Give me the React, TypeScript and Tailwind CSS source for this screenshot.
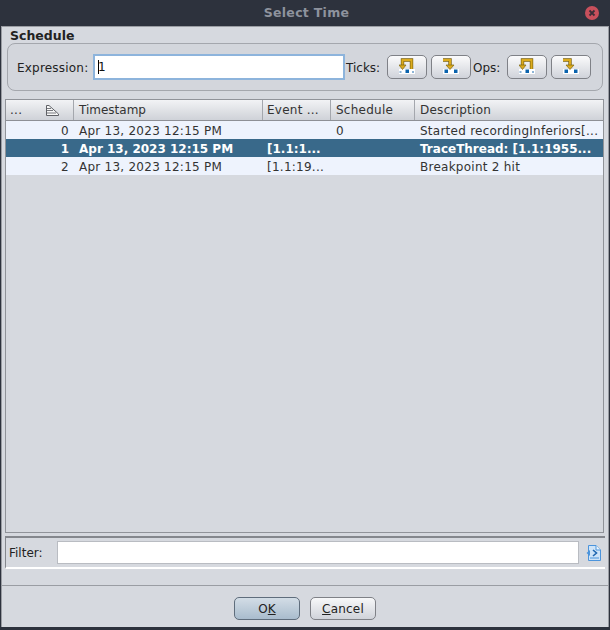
function UndoIcon() {
  return (
    <svg width="16" height="16" viewBox="0 0 16 16" className="mb-[2px]">
      <rect x="0" y="11" width="16" height="5" fill="#ffffff" />
      <path d="M3.5 8V2H12.5V11" fill="none" stroke="#7d6410" strokeWidth="3.4" />
      <path d="M3.5 8V2H12.5V11" fill="none" stroke="#dcab1d" strokeWidth="2" />
      <path d="M0 7H7L3.5 11.5Z" fill="#dcab1d" stroke="#7d6410" strokeWidth="0.7" />
      <rect x="6.5" y="11.5" width="3.5" height="3.5" fill="#0a63ad" />
      <rect x="0.5" y="13" width="2" height="2" fill="#8db4d6" />
      <rect x="13" y="13" width="2" height="2" fill="#8db4d6" />
    </svg>
  );
}

function StepIcon() {
  return (
    <svg width="16" height="16" viewBox="0 0 16 16" className="mb-[2px]">
      <rect x="0" y="11" width="16" height="5" fill="#ffffff" />
      <path d="M0 2H7V8" fill="none" stroke="#7d6410" strokeWidth="3.4" />
      <path d="M0 2H7V8" fill="none" stroke="#dcab1d" strokeWidth="2" />
      <path d="M3 7H11L7 11.5Z" fill="#dcab1d" stroke="#7d6410" strokeWidth="0.7" />
      <rect x="1.5" y="11.5" width="3.5" height="3.5" fill="#0a63ad" />
      <rect x="11" y="11.5" width="3.5" height="3.5" fill="#0a63ad" />
    </svg>
  );
}

function IconButton({ children }: { children: React.ReactNode }) {
  return (
    <button className="flex h-[24px] w-[40px] items-center justify-center rounded-[5px] border border-[#7f8187] bg-gradient-to-b from-[#fbfbfc] to-[#d0d3da]">
      {children}
    </button>
  );
}

function SortIcon() {
  return (
    <svg width="13" height="11" viewBox="0 0 13 11">
      <path d="M.5 .5H3L12.5 9V10.5H.5Z" fill="#f7f7f7" stroke="#5f6166" strokeWidth="1" />
      <path d="M1 3.5H5M1 5.5H7M1 8H10" stroke="#77797e" strokeWidth="1" />
    </svg>
  );
}

function FileIcon() {
  return (
    <svg width="15" height="16" viewBox="0 0 15 16">
      <path d="M2.5 .5H10L14.5 5V15.5H2.5Z" fill="#cfe4f8" stroke="#4b94dc" />
      <path d="M10 .5V5H14.5" fill="#eef6fd" stroke="#4b94dc" />
      <path d="M4 13H13" stroke="#4b94dc" />
      <path d="M4 5L.5 8L4 11Z" fill="#4b94dc" />
      <path d="M7 5L10.5 8L7 11" fill="none" stroke="#1f66b0" strokeWidth="1.6" />
    </svg>
  );
}

const colClass = ['w-[68px]', 'w-[189px]', 'w-[68px]', 'w-[84px]', 'flex-1'];

const rows = [
  { n: '0', time: 'Apr 13, 2023 12:15 PM', event: '', sched: '0', desc: 'Started recordingInferiors[...', bg: 'bg-[#eef3fd] tracking-[0.25px] text-[#333333]' },
  { n: '1', time: 'Apr 13, 2023 12:15 PM', event: '[1.1:1...', sched: '', desc: 'TraceThread: [1.1:1955...', bg: 'bg-[#39698a] font-bold text-white' },
  { n: '2', time: 'Apr 13, 2023 12:15 PM', event: '[1.1:19...', sched: '', desc: 'Breakpoint 2 hit', bg: 'bg-[#eef3fd] tracking-[0.25px] text-[#333333]' },
];

export default function App() {
  return (
    <div className="flex h-[630px] w-[610px] flex-col bg-[#2d323d] font-['DejaVu_Sans',sans-serif] text-[12px] leading-none text-[#222222]">
      <div className="flex h-[26px] shrink-0 items-center pr-[11px]">
        <div className="flex-1 pl-[28px] text-center text-[12.5px] font-bold tracking-[0.3px] text-[#8e939d]">Select Time</div>
        <svg width="14" height="14" viewBox="0 0 14 14">
          <circle cx="7" cy="7" r="7" fill="#c8505c" />
          <path d="M4.5 4.5L9.5 9.5M9.5 4.5L4.5 9.5" stroke="#3a2e38" strokeWidth="1.8" />
        </svg>
      </div>

      <div className="mx-[1px] flex flex-1 flex-col border border-b-0 border-[#9a9da3] bg-[#d6d9df]">
        <div className="flex flex-1 flex-col border-b border-[#9a9da3] px-[1px]">
          <div className="flex h-[15px] items-end pl-[7px] text-[12.5px] font-bold leading-[13px] text-[#222222]">Schedule</div>
          <div className="mx-[4px] mt-[1px] flex h-[48px] items-center rounded-[8px] border border-[#a4a7ad] bg-[#d3d6dc] pl-[9px]">
            <span className="w-[76px] pt-[2px] tracking-[0.2px]">Expression:</span>
            <div className="flex h-[26px] w-[252px] items-center border-2 border-[#8db4dc] bg-white pl-[3px] text-[#111111]">
              <span className="h-[14px] w-[1px] bg-black" />
              <span className="-ml-[1px]">1</span>
            </div>
            <span className="ml-[1px] w-[41px] pt-[2px]">Ticks:</span>
            <div className="flex gap-[4px]">
              <IconButton><UndoIcon /></IconButton>
              <IconButton><StepIcon /></IconButton>
            </div>
            <span className="ml-[2px] w-[34px] pt-[2px]">Ops:</span>
            <div className="flex gap-[4px]">
              <IconButton><UndoIcon /></IconButton>
              <IconButton><StepIcon /></IconButton>
            </div>
          </div>

          <div className="ml-[2px] mr-[3px] mt-[8px] flex flex-1 flex-col border border-[#909399] bg-[#d6d9df]">
            <div className="flex h-[21px] shrink-0 border-b border-[#8e9096] bg-gradient-to-b from-[#f2f3f5] to-[#cfd2d8] tracking-[0.25px] text-[#333333]">
              <div className={`${colClass[0]} flex items-center justify-between border-r border-[#a4a7ad] pl-[4px] pr-[14px]`}>
                <span>...</span>
                <SortIcon />
              </div>
              <div className={`${colClass[1]} flex items-center border-r border-[#a4a7ad] pl-[5px] tracking-[0px]`}>Timestamp</div>
              <div className={`${colClass[2]} flex items-center border-r border-[#a4a7ad] pl-[4px]`}>Event ...</div>
              <div className={`${colClass[3]} flex items-center border-r border-[#a4a7ad] pl-[5px]`}>Schedule</div>
              <div className={`${colClass[4]} flex items-center pl-[5px]`}>Description</div>
            </div>
            {rows.map((r) => (
              <div key={r.n} className={`flex h-[18px] shrink-0 items-center pt-[2px] ${r.bg}`}>
                <div className={`${colClass[0]} pr-[5px] text-right`}>{r.n}</div>
                <div className={`${colClass[1]} whitespace-nowrap pl-[5px]`}>{r.time}</div>
                <div className={`${colClass[2]} whitespace-nowrap pl-[4px]`}>{r.event}</div>
                <div className={`${colClass[3]} pl-[5px]`}>{r.sched}</div>
                <div className={`${colClass[4]} whitespace-nowrap pl-[5px]`}>{r.desc}</div>
              </div>
            ))}
          </div>

          <div className="ml-[2px] mr-[2px] mt-[3px] flex h-[33px] shrink-0 items-center border-l border-t-2 border-[#84878d] border-b-2 border-b-white pl-[3px] pr-[4px]">
            <span className="w-[48px]">Filter:</span>
            <div className="h-[23px] flex-1 border border-[#b9bcc2] bg-white" />
            <div className="ml-[7px] flex"><FileIcon /></div>
          </div>
          <div className="h-[16px] shrink-0" />
        </div>

        <div className="flex h-[41px] shrink-0 items-start justify-center pt-[11px]">
          <button className="h-[23px] w-[66px] rounded-[5px] border border-[#5f6d7c] bg-gradient-to-b from-[#d3dde6] to-[#a9bccd] text-[#222222]">
            O<span className="underline">K</span>
          </button>
          <button className="ml-[10px] h-[23px] w-[66px] rounded-[5px] border border-[#7f8187] bg-gradient-to-b from-[#f7f8f9] to-[#d0d3da] tracking-[0.2px] text-[#222222]">
            <span className="underline">C</span>ancel
          </button>
        </div>
      </div>
      <div className="h-[3px] shrink-0" />
    </div>
  );
}
